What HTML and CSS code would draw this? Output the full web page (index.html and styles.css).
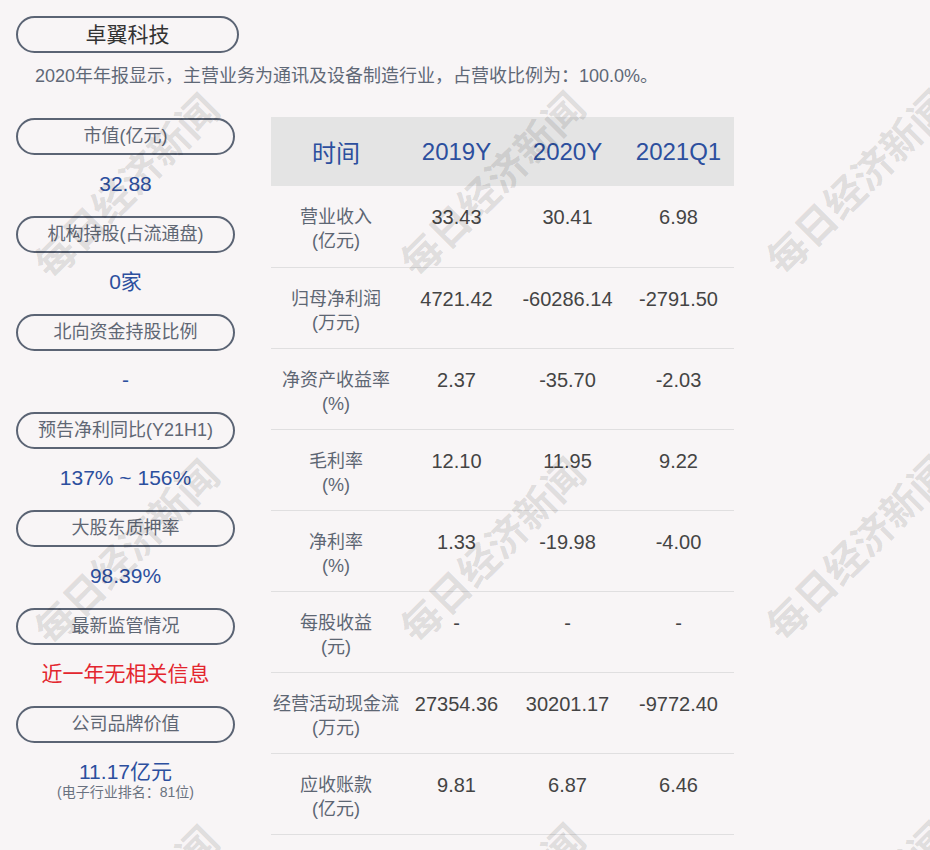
FILE: index.html
```html
<!DOCTYPE html>
<html lang="zh">
<head>
<meta charset="utf-8">
<title>卓翼科技</title>
<link rel="stylesheet" href="styles.css">
</head>
<body>
<div class="page">
  <div class="title-pill">卓翼科技</div>
  <p class="desc">2020年年报显示，主营业务为通讯及设备制造行业，占营收比例为：100.0%。</p>
  <div class="main">
    <div class="side">
      <div class="item"><div class="pill">市值(亿元)</div><div class="val">32.88</div></div>
      <div class="item"><div class="pill">机构持股(占流通盘)</div><div class="val">0家</div></div>
      <div class="item"><div class="pill">北向资金持股比例</div><div class="val">-</div></div>
      <div class="item"><div class="pill">预告净利同比(Y21H1)</div><div class="val">137% ~ 156%</div></div>
      <div class="item"><div class="pill">大股东质押率</div><div class="val">98.39%</div></div>
      <div class="item"><div class="pill">最新监管情况</div><div class="val red">近一年无相关信息</div></div>
      <div class="item"><div class="pill">公司品牌价值</div><div class="val">11.17亿元</div><div class="sub">(电子行业排名：81位)</div></div>
    </div>
    <table class="fin">
      <thead>
        <tr><th class="c1">时间</th><th>2019Y</th><th>2020Y</th><th>2021Q1</th></tr>
      </thead>
      <tbody>
        <tr><td class="lbl">营业收入<br>(亿元)</td><td>33.43</td><td>30.41</td><td>6.98</td></tr>
        <tr><td class="lbl">归母净利润<br>(万元)</td><td>4721.42</td><td>-60286.14</td><td>-2791.50</td></tr>
        <tr><td class="lbl">净资产收益率<br>(%)</td><td>2.37</td><td>-35.70</td><td>-2.03</td></tr>
        <tr><td class="lbl">毛利率<br>(%)</td><td>12.10</td><td>11.95</td><td>9.22</td></tr>
        <tr><td class="lbl">净利率<br>(%)</td><td>1.33</td><td>-19.98</td><td>-4.00</td></tr>
        <tr><td class="lbl">每股收益<br>(元)</td><td>-</td><td>-</td><td>-</td></tr>
        <tr><td class="lbl">经营活动现金流<br>(万元)</td><td>27354.36</td><td>30201.17</td><td>-9772.40</td></tr>
        <tr><td class="lbl">应收账款<br>(亿元)</td><td>9.81</td><td>6.87</td><td>6.46</td></tr>
      </tbody>
    </table>
  </div>
</div>
<div class="wm-layer" aria-hidden="true">
  <span class="wm wm-a1">每日经济新闻</span>
  <span class="wm wm-a2">每日经济新闻</span>
  <span class="wm wm-a3">每日经济新闻</span>
  <span class="wm wm-b1">每日经济新闻</span>
  <span class="wm wm-b2">每日经济新闻</span>
  <span class="wm wm-b3">每日经济新闻</span>
  <span class="wm wm-c1">每日经济新闻</span>
  <span class="wm wm-c2">每日经济新闻</span>
  <span class="wm wm-c3">每日经济新闻</span>
</div>
</body>
</html>
```
FILE: styles.css
```css
html, body {
  margin: 0;
  padding: 0;
  background: #f8f5f6;
  height: 850px;
  overflow: hidden;
}
body {
  font-family: "Liberation Sans", "Noto Sans CJK SC", sans-serif;
  position: relative;
}
.page {
  padding: 16px 0 0 16px;
}
.title-pill {
  box-sizing: border-box;
  width: 223px;
  height: 37px;
  border: 2px solid #5b6474;
  border-radius: 19px;
  text-align: center;
  font-size: 21px;
  line-height: 33px;
  color: #333;
}
.desc {
  margin: 0;
  padding: 11px 0 0 19px;
  font-size: 18px;
  line-height: 24px;
  color: #5f6876;
}
.main {
  display: flex;
  margin-top: 29px;
}
.side {
  width: 219px;
  display: flex;
  flex-direction: column;
}
.item {
  height: 98px;
  display: flex;
  flex-direction: column;
  align-items: center;
}
.pill {
  box-sizing: border-box;
  width: 219px;
  height: 37px;
  border: 2px solid #5b6474;
  border-radius: 19px;
  text-align: center;
  font-size: 18px;
  line-height: 33px;
  color: #5f6774;
  margin-top: 1px;
}
.val {
  margin-top: 17px;
  font-size: 21px;
  line-height: 24px;
  color: #2c4f9e;
}
.val.red {
  color: #e3262e;
}
.sub {
  font-size: 14px;
  line-height: 16px;
  color: #6a7280;
  margin-top: 0;
}
.fin {
  margin-left: 36px;
  width: 463px;
  border-collapse: collapse;
  table-layout: fixed;
}
.fin th {
  background: #e4e4e4;
  height: 69px;
  padding: 0;
  font-weight: normal;
  font-size: 24px;
  color: #2c4f9e;
  text-align: center;
}
.fin th.c1 {
  width: 130px;
}
.fin td {
  height: 81px;
  box-sizing: border-box;
  padding: 19px 0 0;
  vertical-align: top;
  text-align: center;
  border-bottom: 1px solid #e0dfe0;
  font-size: 20px;
  line-height: 24px;
  color: #444;
}
.fin td.lbl {
  font-size: 18px;
  line-height: 24px;
  color: #5d6673;
}
.wm-layer {
  position: absolute;
  left: 0;
  top: 0;
  width: 930px;
  height: 850px;
  pointer-events: none;
  overflow: hidden;
}
.wm {
  position: absolute;
  transform: translate(-50%, -50%) rotate(-45deg);
  font-family: "Noto Sans CJK SC", sans-serif;
  font-weight: 700;
  font-size: 40px;
  line-height: 40px;
  white-space: nowrap;
  color: rgba(0, 0, 0, 0.11);
}
.wm-a1 { left: 125px; top: 185px; }
.wm-a2 { left: 491px; top: 183px; }
.wm-a3 { left: 857px; top: 181px; }
.wm-b1 { left: 125px; top: 551px; }
.wm-b2 { left: 491px; top: 549px; }
.wm-b3 { left: 857px; top: 547px; }
.wm-c1 { left: 125px; top: 917px; }
.wm-c2 { left: 491px; top: 915px; }
.wm-c3 { left: 857px; top: 913px; }
```
